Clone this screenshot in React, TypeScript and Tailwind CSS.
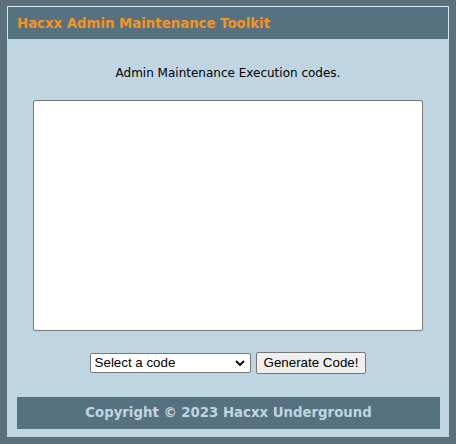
import React from "react";

export default function App() {
  return (
    <div className="w-[456px] h-[444px] bg-[#5b6f7c] pt-[6px] pl-[7px]" style={{ fontFamily: '"DejaVu Sans", Verdana, sans-serif' }}>
      <div className="w-[442px] bg-[#bfd6e2]">
        <div className="h-[33px] bg-[#567180] border-t border-l border-r border-[#dbe6ec] flex items-center pl-[9px] pt-[1px]">
          <span className="text-[#f7941d] font-bold text-[13.3px]">Hacxx Admin Maintenance Toolkit</span>
        </div>
        <div className="flex flex-col items-center">
          <div className="mt-[26px] h-[16px] text-[12px] leading-[16px] text-black">Admin Maintenance Execution codes.</div>
          <textarea className="mt-[19px] w-[390px] h-[231px] bg-white border border-[#767676] rounded-[2px] resize-none outline-none" />
          <div className="mt-[21px] flex items-center gap-[5px]" style={{ fontFamily: '"Liberation Sans", Arial, sans-serif' }}>
            <div className="relative w-[161px] h-[20px] bg-white border border-[#767676] rounded-[2px] flex items-center pl-[4px] text-[13.33px] text-black">
              <span>Select a code</span>
              <svg className="absolute right-[5px] top-[5px]" width="10" height="8" viewBox="0 0 10 8">
                <path d="M1 2 L5 6 L9 2" stroke="#000" strokeWidth="1.8" fill="none" />
              </svg>
            </div>
            <button className="h-[22px] px-[7px] bg-[#efefef] border border-[#767676] rounded-[2px] text-[13.33px] text-black leading-none">Generate Code!</button>
          </div>
        </div>
        <div className="mt-[23px] ml-[10px] w-[423px] h-[32px] bg-[#567180] flex items-center justify-center">
          <span className="text-[#c0d6e2] font-bold text-[13.3px]">Copyright © 2023 Hacxx Underground</span>
        </div>
        <div className="h-[8px]" />
      </div>
    </div>
  );
}
